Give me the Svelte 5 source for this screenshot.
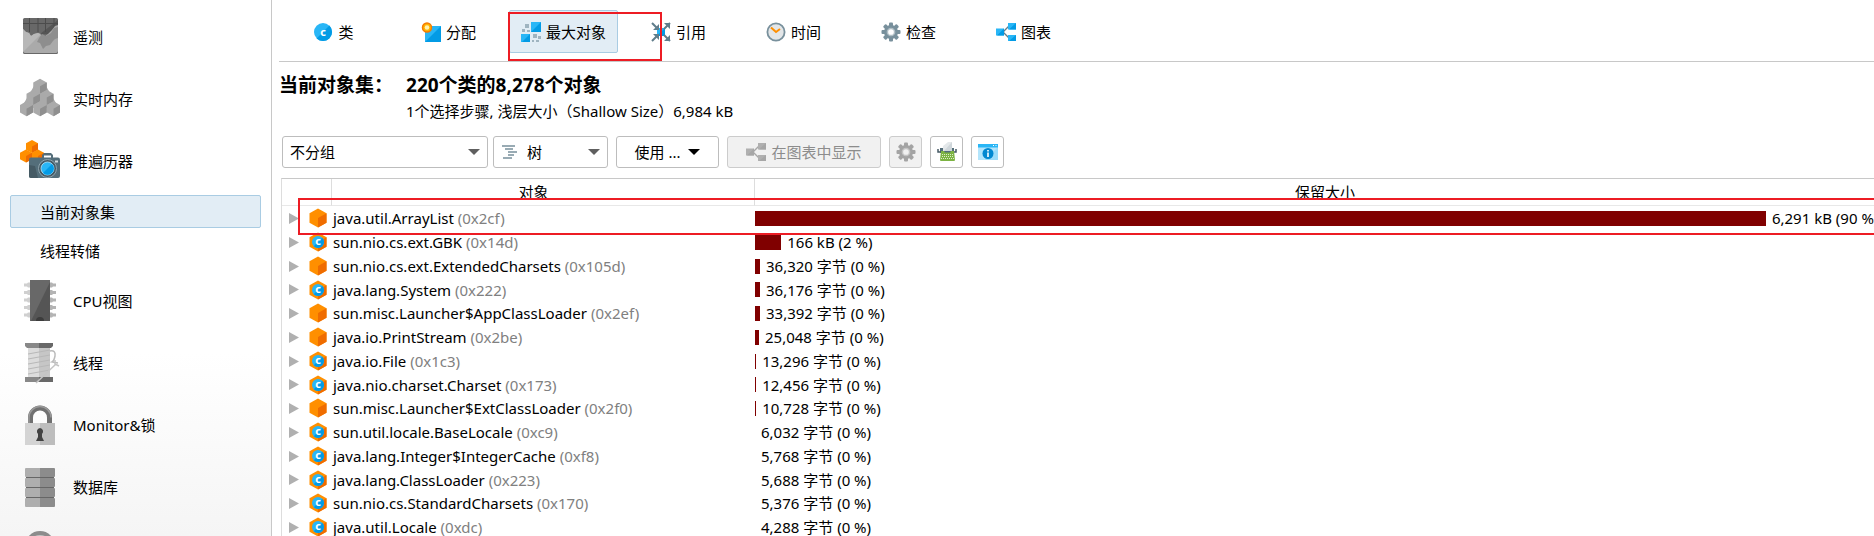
<script>
  const topItems = [
    { label: '遥测', icon: 'telemetry' },
    { label: '实时内存', icon: 'memory' },
    { label: '堆遍历器', icon: 'heap' }
  ];
  const subItems = ['当前对象集', '线程转储'];
  const bottomItems = [
    { label: 'CPU视图', icon: 'cpu' },
    { label: '线程', icon: 'threads' },
    { label: 'Monitor&锁', icon: 'lock' },
    { label: '数据库', icon: 'database' },
    { label: '', icon: 'more' }
  ];
  const tabs = [
    { label: '类', icon: 'class' },
    { label: '分配', icon: 'alloc' },
    { label: '最大对象', icon: 'biggest' },
    { label: '引用', icon: 'refs' },
    { label: '时间', icon: 'time' },
    { label: '检查', icon: 'inspect' },
    { label: '图表', icon: 'graph' }
  ];
  // share: bar length as a percentage of the size column
  const rows = [
    { name: 'java.util.ArrayList', id: '0x2cf', cls: false, share: 88.6, size: '6,291 kB (90 %)' },
    { name: 'sun.nio.cs.ext.GBK', id: '0x14d', cls: true, share: 2.3, size: '166 kB (2 %)' },
    { name: 'sun.nio.cs.ext.ExtendedCharsets', id: '0x105d', cls: false, share: 0.44, size: '36,320 字节 (0 %)' },
    { name: 'java.lang.System', id: '0x222', cls: true, share: 0.44, size: '36,176 字节 (0 %)' },
    { name: 'sun.misc.Launcher$AppClassLoader', id: '0x2ef', cls: false, share: 0.44, size: '33,392 字节 (0 %)' },
    { name: 'java.io.PrintStream', id: '0x2be', cls: false, share: 0.35, size: '25,048 字节 (0 %)' },
    { name: 'java.io.File', id: '0x1c3', cls: true, share: 0.1, size: '13,296 字节 (0 %)' },
    { name: 'java.nio.charset.Charset', id: '0x173', cls: true, share: 0.1, size: '12,456 字节 (0 %)' },
    { name: 'sun.misc.Launcher$ExtClassLoader', id: '0x2f0', cls: false, share: 0.1, size: '10,728 字节 (0 %)' },
    { name: 'sun.util.locale.BaseLocale', id: '0xc9', cls: true, share: 0, size: '6,032 字节 (0 %)' },
    { name: 'java.lang.Integer$IntegerCache', id: '0xf8', cls: true, share: 0, size: '5,768 字节 (0 %)' },
    { name: 'java.lang.ClassLoader', id: '0x223', cls: true, share: 0, size: '5,688 字节 (0 %)' },
    { name: 'sun.nio.cs.StandardCharsets', id: '0x170', cls: true, share: 0, size: '5,376 字节 (0 %)' },
    { name: 'java.util.Locale', id: '0xdc', cls: true, share: 0, size: '4,288 字节 (0 %)' }
  ];
  let activeTab = $state(2);
  let activeSub = $state(0);
</script>

{#snippet cube(x, y, w, h, left, right)}
  <path d="M{x} {y - h}L{x + w} {y - h / 2}V{y + h / 2}L{x} {y + h}L{x - w} {y + h / 2}V{y - h / 2}Z" fill={left} />
  <path d="M{x} {y}L{x + w} {y - h / 2}V{y + h / 2}L{x} {y + h}Z" fill={right} />
{/snippet}

{#snippet gear(body, ring, hole)}
  <g fill={body}>
    {#each [0, 45, 90, 135] as a}
      <rect x="8" y="0.5" width="4" height="19" rx="1" transform="rotate({a} 10 10)" />
    {/each}
    <circle cx="10" cy="10" r="7" />
  </g>
  <circle cx="10" cy="10" r="3.600" fill={hole} stroke={ring} stroke-width="1.500" />
{/snippet}

{#snippet graphIcon(a, b, line)}
  <path d="M7 10L13 4M7 10L13 16" stroke={line} stroke-width="1.4" fill="none" />
  <path d="M0 6.500h8v7h-8zM12 1h8v6.500h-8zM12 13h8v6h-8z" fill={a} />
  <path d="M8 6.500v7h-7zM20 1v6.500h-7zM20 13v6h-7z" fill={b} />
{/snippet}

{#snippet sideIcon(name)}
  <svg width="40" height="42" viewBox="0 0 40 42" aria-hidden="true">
    {#if name === 'telemetry'}
      <rect x="3" y="2" width="35" height="36" rx="1.500" fill="#686868" />
      <path d="M38 4v14h-18z" fill="#555" />
      <path d="M9.500 2v14M18 2v14M25.500 2v14M34 2v14M3 7.500h35" stroke="#4c4c4c" />
      <path d="M3 13l3 3 3 1 2 3 3-2 4-1 3 2 3 2 4-3 4-4 3-4 3-1v26q0 2-2 2H5q-2 0-2-2z" fill="#aaa" />
      <path d="M3 13l3 3 3 1 2 3 3-2 4-1 3 1L3 36z" fill="#b8b8b8" />
      <path d="M38 11l-4 1-3 5-5 3-4-2-3 4-2 4 3 1 3 6 3-3 4-1 3-4 2-2 3-1z" fill="#8e8e8e" />
    {:else if name === 'memory'}
      <path d="M20 1L26 8 33 20 39 30H1L7 20 14 8z" fill="#aaa" />
      {@render cube(20, 8.250, 6.750, 7.500, '#aaa', '#8f8f8f')}
      {@render cube(13.250, 19.500, 6.750, 7.500, '#aaa', '#8f8f8f')}
      {@render cube(26.750, 19.500, 6.750, 7.500, '#aaa', '#8f8f8f')}
      {@render cube(6.500, 30.750, 6.500, 7.500, '#aaa', '#8f8f8f')}
      {@render cube(20, 30.750, 6.750, 7.500, '#aaa', '#8f8f8f')}
      {@render cube(33.500, 30.750, 6.500, 7.500, '#aaa', '#8f8f8f')}
    {:else if name === 'heap'}
      {@render cube(12, 6.500, 6, 6.500, '#ff8f00', '#ef6c00')}
      {@render cube(6, 16, 6, 6.500, '#ff8f00', '#ef6c00')}
      {@render cube(18, 16, 6, 6.500, '#ff8f00', '#ef6c00')}
      <path d="M22 18v-3l2-2h7l2 2v3h-2v-2.500h-7V18z" fill="#546e7a" />
      <rect x="9" y="17.500" width="31" height="20.500" rx="2" fill="#546e7a" />
      <path d="M9 25v11q0 2 2 2h7l-3-12z" fill="#455a64" />
      <path d="M35 20.500h3v2h-3z" fill="#cfd8dc" />
      <circle cx="27.500" cy="28.500" r="9" fill="#455a64" stroke="#90a4ae" />
      <circle cx="27.500" cy="28.500" r="6.500" fill="#29b6f6" stroke="#b3e5fc" stroke-width="0.8" />
      <path d="M23 33A6.300 6.300 0 0 0 32 24z" fill="#039be5" />
    {:else if name === 'cpu'}
      {#each [5, 12.500, 20, 27.500, 35] as y}
        <path d="M4 {y - 1.500}h3l1-1h2v5h-2l-1-1h-3z" fill="#d0d0d0" />
        <path d="M36 {y - 1.500}h-3l-1-1h-2v5h2l1-1h3z" fill="#b4b4b4" />
      {/each}
      <path d="M10 0h20v41h-20z" fill="#686868" />
      <path d="M30 2v39h-19z" fill="#555" />
      <path d="M16 41a4 4 0 0 1 8 0z" fill="#3c3c3c" />
    {:else if name === 'threads'}
      <path d="M8 6h22v30h-22z" fill="#dcdcdc" />
      <path d="M19 6h11v30h-11z" fill="#c6c6c6" />
      <path d="M8 12l22-4M8 17l22-4M8 22l22-4M8 27l22-4M8 32l22-4" stroke="#b8b8b8" />
      <path d="M30 9q6-1 5 5-1 5-3 6l6 1" fill="none" stroke="#bbb" stroke-width="1.500" />
      <path d="M5 1h14v5H7l-2-2z" fill="#888" /><path d="M19 1h14v3l-2 2H19z" fill="#686868" />
      <path d="M5 35h14v5H5z" fill="#888" /><path d="M19 35h14v5H19z" fill="#686868" />
      <path d="M16 41L36 22M35 18v4l4 2" fill="none" stroke="#c4c4c4" stroke-width="1.500" />
    {:else if name === 'lock'}
      <path d="M10.500 20v-6.500a9.500 9.500 0 0 1 19 0V20" fill="none" stroke="#707070" stroke-width="5" />
      <path d="M9 20v-6.500a11 11 0 0 1 22 0" fill="none" stroke="#999" stroke-width="1.500" />
      <path d="M5 19h15v22H5z" fill="#d4d4d4" /><path d="M20 19h15v22H20z" fill="#bdbdbd" />
      <path d="M20 24a3.500 3.500 0 0 1 2 6v3l2 4h-8l2-4v-3a3.500 3.500 0 0 1 2-6z" fill="#424242" />
    {:else if name === 'database'}
      {#each [2, 12, 22, 32] as y}
        <rect x="5" y={y} width="30" height="9" rx="1" fill="#aeaeae" />
        <path d="M20 {y}h14l1 1v7l-1 1H20z" fill="#8c8c8c" />
      {/each}
      <path d="M6 11.500h28M6 21.500h28M6 31.500h28" stroke="#666" />
    {:else}
      <circle cx="20" cy="18" r="15" fill="#8c8c8c" /><circle cx="20" cy="19" r="12" fill="#c4c4c4" />
    {/if}
  </svg>
{/snippet}

{#snippet tabIcon(name)}
  <svg width="20" height="20" viewBox="0 0 20 20" aria-hidden="true">
    {#if name === 'class'}
      <circle cx="10" cy="10" r="9" fill="#29b6f6" />
      <path d="M16.400 3.600A9 9 0 0 1 3.600 16.400z" fill="#039be5" />
      <text x="10" y="13.500" text-anchor="middle" class="glyph">c</text>
    {:else if name === 'alloc'}
      <path d="M4 4h16v16H4z" fill="#29b6f6" /><path d="M20 4v16H4z" fill="#039be5" />
      <circle cx="6" cy="5.500" r="4.500" fill="#ffb300" stroke="#f57c00" stroke-width="1.500" />
      <circle cx="6" cy="5.500" r="2.300" fill="#fff3b0" />
    {:else if name === 'biggest'}
      <path d="M10 0h10v10H10zM0 12h9v8H0z" fill="#29b6f6" /><path d="M20 0v10H10zM9 12v8H1z" fill="#039be5" />
      <path d="M4 2h4v4h-4zM1 7h3v3h-3zM6 8h3v2h-3zM12 12h4v4h-4zM17 14h3v3h-3zM11 18h2v2h-2zM15 18h3v2h-3z" fill="#9fb4c0" />
    {:else if name === 'refs'}
      <path d="M6 6h8v8H6z" fill="#29b6f6" /><path d="M14 6v8H6z" fill="#039be5" />
      <path d="M1 1l6 6M19 1l-6 6M1 19l6-6M19 19l-6-6" stroke="#607d8b" stroke-width="2" />
      <path d="M8 2v6H2zM19 7V1h-6zM8 18v-6H2zM19 13v6h-6z" fill="#607d8b" />
    {:else if name === 'time'}
      <circle cx="10" cy="10" r="8.600" fill="#e3e6e8" stroke="#78909c" stroke-width="1.800" />
      <path d="M5 5.500l5 4.500 4-3" fill="none" stroke="#ff8f00" stroke-width="2" />
    {:else if name === 'inspect'}
      {@render gear('#78909c', '#b0bec5', '#fff')}
    {:else}
      {@render graphIcon('#29b6f6', '#039be5', '#607d8b')}
    {/if}
  </svg>
{/snippet}

{#snippet arrow(color)}
  <svg class="arrow" width="12" height="6" viewBox="0 0 12 6" aria-hidden="true"><path d="M0 0h12L6 6z" fill={color} /></svg>
{/snippet}

<div class="app">
  <nav class="sidebar">
    {#each topItems as item}
      <button class="item">{@render sideIcon(item.icon)}<span>{item.label}</span></button>
    {/each}
    <div class="subs">
      {#each subItems as label, i}
        <button class="sub" class:selected={activeSub === i} onclick={() => (activeSub = i)}>{label}</button>
      {/each}
    </div>
    {#each bottomItems as item}
      <button class="item" aria-label={item.label || '更多'}>{@render sideIcon(item.icon)}<span>{item.label}</span></button>
    {/each}
  </nav>

  <main>
    <div class="tabs">
      {#each tabs as tab, i}
        <button class="tab" class:selected={activeTab === i} onclick={() => (activeTab = i)}>
          {@render tabIcon(tab.icon)}<span>{tab.label}</span>
          {#if i === 2}<i class="mark tab-mark"></i>{/if}
        </button>
      {/each}
    </div>

    <header class="summary">
      <h1>当前对象集：</h1>
      <div>
        <h2>220个类的8,278个对象</h2>
        <p>1个选择步骤, 浅层大小（Shallow Size）6,984 kB</p>
      </div>
    </header>

    <div class="tools">
      <div class="combo wide">
        <select aria-label="分组"><option>不分组</option></select>
        {@render arrow('#5f5f5f')}
      </div>
      <div class="combo tree">
        <svg class="lead" width="15" height="14" viewBox="0 0 15 14" aria-hidden="true">
          <path d="M0 1h13M3 4h8M6 7h9M6 10h6M1 13h9" stroke="#78909c" stroke-width="1.300" />
        </svg>
        <select aria-label="视图"><option>树</option></select>
        {@render arrow('#5f5f5f')}
      </div>
      <button class="btn use">使用 ... {@render arrow('#000')}</button>
      <button class="btn show" disabled>
        <svg width="20" height="20" viewBox="0 0 20 20" aria-hidden="true">{@render graphIcon('#b0b0b0', '#a6a6a6', '#a6a6a6')}</svg>
        在图表中显示
      </button>
      <button class="btn square" disabled aria-label="设置">
        <svg width="20" height="20" viewBox="0 0 20 20" aria-hidden="true">{@render gear('#a4a4a4', '#c4c4c4', '#f1f1f1')}</svg>
      </button>
      <button class="btn square" aria-label="导出">
        <svg width="20" height="20" viewBox="0 0 20 20" aria-hidden="true">
          <path d="M3 6h14v5H3z" fill="#546e7a" />
          <path d="M1 7v3h3M19 7v3h-3" fill="none" stroke="#455a64" stroke-width="1.500" />
          <path d="M6 9V4l5-4h4v9z" fill="#e4e8ea" /><path d="M15 0v9H7z" fill="#cfd6da" />
          <path d="M4 9h3l1 1.500h5L14 9h3l1 9q0 1-1 1H4q-1 0-1-1z" fill="#7cb342" />
          <path d="M5 12.500h11M5 14.500h11M4 16.500h13" stroke="#dcedc8" stroke-dasharray="1 1" />
        </svg>
      </button>
      <button class="btn square" aria-label="信息">
        <svg width="20" height="20" viewBox="0 0 20 20" aria-hidden="true">
          <path d="M0 2h20v16H0z" fill="#b3e5fc" /><path d="M20 5v13H7z" fill="#9bdcfa" />
          <path d="M0 2h20v3.500H0z" fill="#29b6f6" /><path d="M15 3.500h1M17.500 3.500h1" stroke="#fff" />
          <circle cx="10" cy="11.500" r="5.500" fill="#0288d1" />
          <path d="M10 8v1.600M10 10.500v4.500" stroke="#fff" stroke-width="1.600" />
        </svg>
      </button>
    </div>

    <div class="grid">
      <table>
        <colgroup><col class="c-tree" /><col class="c-name" /><col /></colgroup>
        <thead>
          <tr><th></th><th class="name-head">对象</th><th>保留大小</th></tr>
        </thead>
        <tbody>
          {#each rows as row}
            <tr>
              <td>
                <div class="node">
                  <button class="expand" aria-label="展开">
                    <svg width="10" height="11" viewBox="0 0 10 11" aria-hidden="true"><path d="M0 0l10 5.500L0 11z" fill="#b0b0b0" /></svg>
                  </button>
                  <svg width="18" height="20" viewBox="0 0 18 20" aria-hidden="true">
                    {@render cube(9, 10, 8.500, 9.500, '#ff8f00', '#ef6c00')}
                    {#if row.cls}
                      <circle cx="9" cy="10" r="6" fill="#29b6f6" />
                      <path d="M13.250 5.750A6 6 0 0 1 4.750 14.250z" fill="#039be5" />
                      <text x="9" y="13" text-anchor="middle" class="glyph">c</text>
                    {/if}
                  </svg>
                </div>
              </td>
              <td class="name">{row.name} <span class="addr">({row.id})</span></td>
              <td>
                <div class="size">
                  <span class="bar" style="width: {row.share}%"></span>
                  <span class="value">{row.size}</span>
                </div>
              </td>
            </tr>
          {/each}
        </tbody>
      </table>
      <i class="mark row-mark"></i>
    </div>
  </main>
</div>

<style>
  :global(body) {
    margin: 0;
    background: #fff;
  }
  .app {
    display: flex;
    height: 100vh;
    overflow: hidden;
    color: #000;
    font: 15px/20px 'Noto Sans', 'Noto Sans CJK SC', sans-serif;
  }
  button,
  select {
    font: inherit;
    color: inherit;
    box-sizing: border-box;
    margin: 0;
  }
  svg {
    flex: none;
    display: block;
  }
  .glyph {
    font: bold 11px 'Noto Sans', sans-serif;
    fill: #fff;
  }
  .sidebar {
    flex: none;
    box-sizing: border-box;
    width: 272px;
    padding-top: 6px;
    border-right: 1px solid #c8c8c8;
    background: linear-gradient(#fff 66%, #f5f5f5);
  }
  .item {
    display: flex;
    align-items: center;
    gap: 13px;
    width: 100%;
    height: 62px;
    padding: 0 20px;
    border: 0;
    background: none;
    text-align: left;
  }
  .subs {
    display: grid;
    gap: 6px;
    padding: 3px 10px;
  }
  .sub {
    height: 33px;
    padding: 0 29px;
    border: 1px solid transparent;
    border-radius: 2px;
    background: none;
    text-align: left;
  }
  .sub.selected,
  .tab.selected {
    background: #e2edf5;
    border-color: #a9cce3;
  }
  main {
    flex: 1;
    min-width: 0;
    display: flex;
    flex-direction: column;
  }
  .tabs {
    display: flex;
    gap: 6px;
    margin-left: 7px;
    padding: 10px 0 8px;
    border-bottom: 1px solid #c8c8c8;
  }
  .tab {
    position: relative;
    display: flex;
    align-items: center;
    justify-content: center;
    gap: 5px;
    width: 109px;
    height: 43px;
    padding: 0;
    border: 1px solid transparent;
    border-radius: 2px;
    background: none;
    white-space: nowrap;
  }
  .mark {
    position: absolute;
    z-index: 1;
    box-sizing: border-box;
    border: 2px solid #ed1c24;
    pointer-events: none;
  }
  .tab-mark {
    top: 1px;
    left: -2px;
    width: 154px;
    height: 49px;
  }
  .summary {
    display: flex;
    gap: 13px;
    padding: 11px 0 0 7px;
  }
  h1,
  h2 {
    margin: 0;
    font-size: 19px;
    line-height: 24px;
    font-weight: bold;
  }
  p {
    margin: 4px 0 0;
  }
  .tools {
    display: flex;
    gap: 8px;
    padding: 15px 0 10px 10px;
  }
  .combo {
    display: grid;
    align-items: center;
  }
  .combo > * {
    grid-area: 1 / 1;
  }
  .combo .arrow {
    justify-self: end;
    margin-right: 8px;
    pointer-events: none;
  }
  .lead {
    margin-left: 9px;
    z-index: 1;
  }
  select {
    appearance: none;
    width: 100%;
    height: 32px;
    padding: 0 7px;
    border: 1px solid #bdbdbd;
    border-radius: 3px;
    background: #fff;
  }
  .wide {
    width: 206px;
  }
  .tree {
    width: 115px;
    margin-left: -3px;
  }
  .tree select {
    padding-left: 33px;
  }
  .btn {
    display: flex;
    align-items: center;
    justify-content: center;
    gap: 8px;
    height: 32px;
    padding: 0;
    border: 1px solid #bdbdbd;
    border-radius: 3px;
    background: #fff;
    white-space: nowrap;
  }
  .btn:disabled {
    background: #f1f1f1;
    border-color: #ccc;
    color: #8c8c8c;
  }
  .use {
    width: 103px;
  }
  .show {
    width: 154px;
    gap: 5px;
  }
  .square {
    width: 33px;
  }
  .grid {
    position: relative;
    flex: 1;
    margin: 0 -23px 0 9px;
    border: 1px solid #c8c8c8;
    border-left-color: #ddd;
  }
  table {
    width: 100%;
    border-collapse: separate;
    border-spacing: 0;
    table-layout: fixed;
  }
  .c-tree {
    width: 50px;
  }
  .c-name {
    width: 423px;
  }
  th {
    height: 26px;
    padding: 0;
    font-weight: normal;
    border-right: 1px solid #ddd;
    border-bottom: 1px solid #e8e8e8;
  }
  .name-head {
    padding-right: 19px;
  }
  td {
    height: 24px;
    padding: 0;
    white-space: nowrap;
  }
  .name {
    padding-left: 1px;
  }
  tbody tr:nth-child(4n) td {
    height: 23px;
  }
  .node {
    display: flex;
    align-items: center;
    gap: 10px;
    padding-left: 7px;
  }
  .expand {
    padding: 0;
    border: 0;
    background: none;
  }
  .addr {
    color: #808080;
  }
  .size {
    display: flex;
    align-items: center;
    gap: 6px;
  }
  .bar {
    flex: none;
    height: 15px;
    background: #800000;
  }
  .row-mark {
    top: 19px;
    left: 16px;
    right: 0;
    height: 37px;
  }
</style>
